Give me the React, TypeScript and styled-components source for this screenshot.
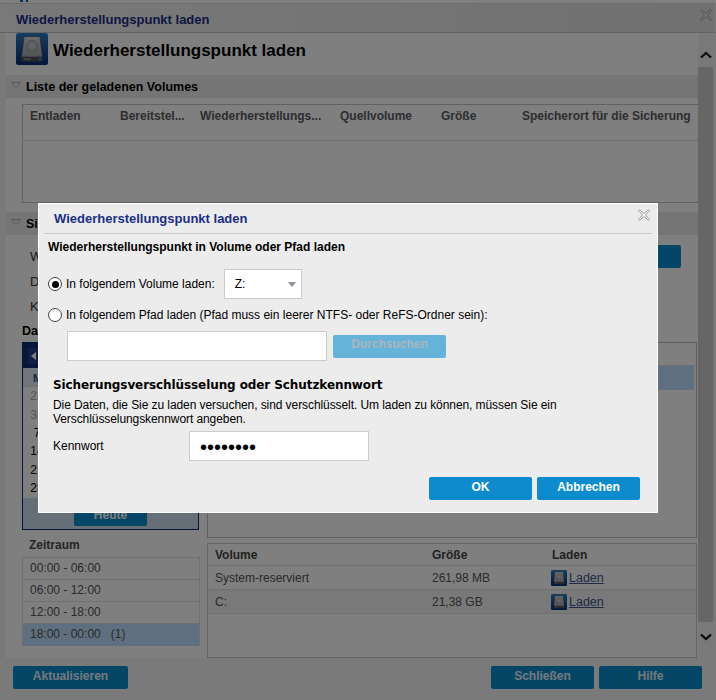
import styled, { createGlobalStyle } from 'styled-components';

const GlobalStyle = createGlobalStyle`
  html, body {
    margin: 0;
    padding: 0;
    background: #fff;
  }
  body {
    font-family: "Liberation Sans", Arial, sans-serif;
    font-size: 12px;
    color: #000;
  }
`;

const columns = [
  { label: 'Entladen', width: 90 },
  { label: 'Bereitstel...', width: 80 },
  { label: 'Wiederherstellungs...', width: 140 },
  { label: 'Quellvolume', width: 101 },
  { label: 'Größe', width: 81 },
  { label: 'Speicherort für die Sicherung', width: 175 },
];

// only the first column of the month shows beside the dialog
const calendarDays = ['23', '30', '7', '14', '21', '28'];

const periods = ['00:00 - 06:00', '06:00 - 12:00', '12:00 - 18:00', '18:00 - 00:00   (1)'];

function DiskIcon({ size }: { size: number }) {
  return (
    <svg width={size} height={size} viewBox="0 0 32 32">
      <defs>
        <linearGradient id="diskBg" x1="0" y1="0" x2="0" y2="1">
          <stop offset="0" stopColor="#2a7cc6" />
          <stop offset="1" stopColor="#0a2a72" />
        </linearGradient>
        <linearGradient id="diskBody" x1="0" y1="0" x2="0" y2="1">
          <stop offset="0" stopColor="#d0d2d4" />
          <stop offset="1" stopColor="#a4a8ab" />
        </linearGradient>
      </defs>
      <rect width="32" height="32" rx="2.500" fill="url(#diskBg)" />
      <path d="M8 3.500h16l2.500 20.500h-21z" fill="url(#diskBody)" stroke="#4e5358" strokeWidth="0.8" />
      <circle cx="16" cy="13" r="5.500" fill="#b8bcbf" stroke="#94999d" />
      <circle cx="16" cy="13" r="1.600" fill="#d8dadc" />
      <rect x="5.500" y="24" width="21" height="4.500" fill="#4c5156" />
      <rect x="8" y="25.600" width="7" height="1" fill="#a8acb0" />
      <rect x="23" y="25" width="2" height="2" fill="#3f8fe0" />
    </svg>
  );
}

function CloseIcon() {
  return (
    <svg width="12" height="12" viewBox="0 0 12 12">
      <path
        d="M1.500 .5 6 4.500 10.500 .5 11.500 1.500 7.500 6 11.500 10.500 10.500 11.500 6 7.500 1.500 11.500 .5 10.500 4.500 6 .5 1.500z"
        fill="#f4f4f4"
        stroke="#8a8a8a"
        strokeWidth="0.8"
      />
    </svg>
  );
}

function Chevron({ down }: { down?: boolean }) {
  return (
    <svg width="12" height="8" viewBox="0 0 12 8">
      <path d={down ? 'M1 1.500 6 6 11 1.500' : 'M1 6.500 6 2 11 6.500'} fill="none" stroke="#111" strokeWidth="2.200" />
    </svg>
  );
}

function SectionHeader({ title }: { title: string }) {
  return (
    <SectionBar>
      <svg width="10" height="6" viewBox="0 0 10 6">
        <path d="M.5 .5h9L5 5.500z" fill="none" stroke="#b4b4b4" />
      </svg>
      <span>{title}</span>
    </SectionBar>
  );
}

export default function App() {
  return (
    <Page>
      <GlobalStyle />
      <TopSliver>
        <SliverBit />
        <SliverBit />
      </TopSliver>
      <TitleBar>
        <WindowTitle>Wiederherstellungspunkt laden</WindowTitle>
        <CloseIcon />
      </TitleBar>
      <Body>
        <Content>
          <HeadRow>
            <DiskIcon size={32} />
            <h1>Wiederherstellungspunkt laden</h1>
          </HeadRow>
          <SectionHeader title="Liste der geladenen Volumes" />
          <MountedTable>
            <MountedHead>
              {columns.map((c) => (
                <MountedCell key={c.label} $width={c.width}>
                  {c.label}
                </MountedCell>
              ))}
            </MountedHead>
          </MountedTable>
          <SecondSection>
            <SectionHeader title="Si" />
          </SecondSection>
          <FormBlock>
            <FormRow>
              <span>W</span>
              <SmallButton />
            </FormRow>
            <FormRow>D</FormRow>
            <FormRow>K</FormRow>
            <DateLabel>Dat</DateLabel>
          </FormBlock>
          <Split>
            <LeftColumn>
              <Calendar>
                <CalendarHead>
                  <BackButton />
                </CalendarHead>
                <WeekDays>M</WeekDays>
                <Weeks>
                  {calendarDays.map((day, i) => (
                    <DayCell key={day} $muted={i < 2}>
                      {day}
                    </DayCell>
                  ))}
                </Weeks>
                <CalendarFoot>
                  <TodayButton>Heute</TodayButton>
                </CalendarFoot>
              </Calendar>
              <PeriodTitle>Zeitraum</PeriodTitle>
              <PeriodList>
                {periods.map((p, i) => (
                  <PeriodRow key={p} $selected={i === 3}>
                    {p}
                  </PeriodRow>
                ))}
              </PeriodList>
            </LeftColumn>
            <RightColumn>
              <PointsPanel>
                <PointsHead />
                <SelectedPoint />
              </PointsPanel>
              <VolumePanel>
                <VolumeRow $head>
                  <VolumeName>Volume</VolumeName>
                  <VolumeSize>Größe</VolumeSize>
                  <span>Laden</span>
                </VolumeRow>
                <VolumeRow>
                  <VolumeName>System-reserviert</VolumeName>
                  <VolumeSize>261,98 MB</VolumeSize>
                  <LoadLink>
                    <DiskIcon size={16} />
                    <a>Laden</a>
                  </LoadLink>
                </VolumeRow>
                <VolumeRow $alt>
                  <VolumeName>C:</VolumeName>
                  <VolumeSize>21,38 GB</VolumeSize>
                  <LoadLink>
                    <DiskIcon size={16} />
                    <a>Laden</a>
                  </LoadLink>
                </VolumeRow>
              </VolumePanel>
            </RightColumn>
          </Split>
        </Content>
        <ScrollBar>
          <Chevron />
          <ScrollThumb />
          <Chevron down />
        </ScrollBar>
      </Body>
      <Footer>
        <BlueButton $width={115}>Aktualisieren</BlueButton>
        <FooterRight>
          <BlueButton $width={103}>Schließen</BlueButton>
          <BlueButton $width={103}>Hilfe</BlueButton>
        </FooterRight>
      </Footer>

      <Mask />

      <Modal>
        <ModalTitleBar>
          <h2>Wiederherstellungspunkt laden</h2>
          <CloseIcon />
        </ModalTitleBar>
        <ModalBody>
          <ModalLead>Wiederherstellungspunkt in Volume oder Pfad laden</ModalLead>
          <VolumeChoice>
            <Radio $checked />
            <span>In folgendem Volume laden:</span>
            <FakeSelect>
              <span>Z:</span>
              <SelectCaret />
            </FakeSelect>
          </VolumeChoice>
          <PathChoice>
            <Radio />
            <span>In folgendem Pfad laden (Pfad muss ein leerer NTFS- oder ReFS-Ordner sein):</span>
          </PathChoice>
          <PathRow>
            <PathInput readOnly value="" />
            <BrowseButton>Durchsuchen</BrowseButton>
          </PathRow>
          <Encryption>
            <h3>Sicherungsverschlüsselung oder Schutzkennwort</h3>
            <p>
              Die Daten, die Sie zu laden versuchen, sind verschlüsselt. Um laden zu können, müssen Sie ein
              <br />
              Verschlüsselungskennwort angeben.
            </p>
            <PasswordRow>
              <label>Kennwort</label>
              <PasswordInput type="password" readOnly value="12345678" />
            </PasswordRow>
          </Encryption>
          <ModalActions>
            <ModalButton>OK</ModalButton>
            <ModalButton>Abbrechen</ModalButton>
          </ModalActions>
        </ModalBody>
      </Modal>
    </Page>
  );
}

const Page = styled.div`
  position: relative;
  width: 716px;
  height: 700px;
  overflow: hidden;
  display: flex;
  flex-direction: column;
  background: #f2f2f2;
`;

const TopSliver = styled.div`
  height: 3px;
  flex: none;
  background: #fff;
  display: flex;
  gap: 3px;
  padding-left: 20px;
`;

const SliverBit = styled.div`
  width: 2.500px;
  height: 2px;
  background: #1c5fb0;
`;

const TitleBar = styled.div`
  height: 30px;
  flex: none;
  display: flex;
  align-items: center;
  justify-content: space-between;
  padding: 0 3px 0 16px;
  margin-right: 1px;
  background: linear-gradient(90deg, #f2f2f2, #e2e2e2);
  border-top: 1px solid #dcdcdc;
  border-bottom: 1px solid #c4c4c4;
  box-sizing: border-box;

  svg {
    margin-bottom: 6px;
  }
`;

const WindowTitle = styled.div`
  font-size: 13px;
  font-weight: bold;
  color: #1a2f86;
  margin-top: 3px;
`;

const Body = styled.div`
  flex: none;
  height: 625px;
  display: flex;
  padding-left: 6px;
`;

const Content = styled.div`
  width: 692px;
  flex: none;
  background: #fff;
`;

const HeadRow = styled.div`
  height: 42px;
  display: flex;
  align-items: flex-start;
  gap: 5px;
  padding-left: 10px;
  box-sizing: border-box;

  h1 {
    margin: 8px 0 0;
    font-size: 17px;
    line-height: 20px;
    font-weight: bold;
    color: #000;
  }
`;

const SectionBar = styled.div`
  height: 23px;
  display: flex;
  align-items: center;
  gap: 5px;
  padding-left: 5px;
  background: #ebebeb;
  font-size: 12.500px;
  font-weight: bold;

  svg {
    margin-bottom: 3px;
  }
`;

const MountedTable = styled.div`
  height: 99px;
  margin: 6px 0 0 16px;
  border: 1px solid #c0c0cc;
  border-right: none;
  box-sizing: border-box;
`;

const MountedHead = styled.div`
  height: 36px;
  display: flex;
  padding: 4px 0 0 7px;
  box-sizing: border-box;
  border-bottom: 1px solid #d8d8d8;
`;

const MountedCell = styled.div<{ $width: number }>`
  width: ${(p) => p.$width}px;
  flex: none;
  font-size: 12px;
  font-weight: bold;
  color: #5c5c5c;
  white-space: nowrap;
`;

const SecondSection = styled.div`
  margin-top: 9px;
`;

const FormBlock = styled.div`
  height: 107px;
  padding-top: 9px;
  box-sizing: border-box;
`;

const FormRow = styled.div`
  height: 24px;
  display: flex;
  align-items: center;
  justify-content: space-between;
  padding: 0 17px 0 24px;
  font-size: 13px;
  color: #333;

  & + & {
    margin-top: 1px;
  }
`;

const SmallButton = styled.div`
  width: 100px;
  height: 23px;
  border-radius: 2px;
  background: #0a8ccf;
`;

const DateLabel = styled.div`
  height: 22px;
  margin-top: 2px;
  padding-left: 16px;
  font-size: 12.500px;
  font-weight: bold;
  display: flex;
  align-items: center;
`;

const Split = styled.div`
  display: grid;
  grid-template-columns: 178px 490px;
  column-gap: 7px;
  padding-left: 16px;
`;

const LeftColumn = styled.div`
  display: flex;
  flex-direction: column;
`;

const RightColumn = styled.div`
  display: flex;
  flex-direction: column;
  gap: 5px;
`;

const Calendar = styled.div`
  width: 177px;
  height: 188px;
  border: 1px solid #0e2a6e;
  box-sizing: border-box;
  display: flex;
  flex-direction: column;
`;

const CalendarHead = styled.div`
  height: 25px;
  flex: none;
  background: #0e2a6e;
  display: flex;
  align-items: center;
  padding-left: 5px;
`;

const BackButton = styled.div`
  width: 12px;
  height: 16px;
  background: #1c3c8c;
  position: relative;

  &::before {
    content: '';
    position: absolute;
    left: 3px;
    top: 4px;
    border-style: solid;
    border-width: 4px 5px 4px 0;
    border-color: transparent #fff transparent transparent;
  }
`;

const WeekDays = styled.div`
  height: 19px;
  flex: none;
  display: flex;
  align-items: center;
  padding-left: 10px;
  background: #e2e8f2;
  font-weight: bold;
  color: #2c4a90;
  font-size: 11px;
`;

const Weeks = styled.div`
  flex: none;
  display: grid;
  grid-template-columns: 28px;
  grid-auto-rows: 18.400px;
  align-items: center;
  justify-items: center;
`;

const DayCell = styled.div<{ $muted: boolean }>`
  font-size: 12px;
  color: ${(p) => (p.$muted ? '#aaaaaa' : '#000')};
`;

const CalendarFoot = styled.div`
  flex: 1;
  margin-top: 1px;
  background: #ccdcf0;
  display: flex;
  justify-content: center;
  align-items: flex-end;
  padding-bottom: 3px;
`;

const TodayButton = styled.div`
  width: 73px;
  height: 22px;
  border-radius: 2px;
  background: #0a8ccf;
  color: #fff;
  font-weight: bold;
  text-align: center;
  line-height: 22px;
`;

const PeriodTitle = styled.div`
  height: 27px;
  padding: 3px 0 0 7px;
  box-sizing: border-box;
  display: flex;
  align-items: center;
  font-weight: bold;
  color: #4a4a4a;
`;

const PeriodList = styled.div`
  border: 1px solid #e0e0e0;
  border-bottom: none;
`;

const PeriodRow = styled.div<{ $selected: boolean }>`
  height: 22px;
  box-sizing: border-box;
  line-height: 21px;
  padding-left: 7px;
  white-space: pre;
  color: #555;
  border-bottom: 1px solid ${(p) => (p.$selected ? '#c0dfff' : '#e0e0e0')};
  background: ${(p) => (p.$selected ? '#c0dfff' : 'transparent')};
`;

const PointsPanel = styled.div`
  height: 196px;
  border: 1px solid #c0c0c8;
  box-sizing: border-box;
  padding-right: 2px;
`;

const PointsHead = styled.div`
  height: 22px;
  border-bottom: 1px solid #e0e0e0;
  margin-right: -2px;
`;

const SelectedPoint = styled.div`
  height: 24px;
  background: #c0dfff;
`;

const VolumePanel = styled.div`
  height: 115px;
  border: 1px solid #c8c8c8;
  box-sizing: border-box;
`;

const VolumeRow = styled.div<{ $head?: boolean; $alt?: boolean }>`
  height: ${(p) => (p.$head ? 22 : 24)}px;
  display: flex;
  align-items: center;
  padding-left: 7px;
  box-sizing: border-box;
  border-bottom: 1px solid #e0e0e0;
  color: ${(p) => (p.$head ? '#444' : '#555')};
  font-weight: ${(p) => (p.$head ? 'bold' : 'normal')};
  background: ${(p) => (p.$alt ? '#f2f2f2' : 'transparent')};
`;

const VolumeName = styled.span`
  width: 217px;
  flex: none;
`;

const VolumeSize = styled.span`
  width: 120px;
  flex: none;
`;

const LoadLink = styled.span`
  display: flex;
  align-items: center;
  gap: 2px;
  margin-left: -1px;

  a {
    font-size: 12.500px;
    color: #3a5490;
    text-decoration: underline;
  }
`;

const ScrollBar = styled.div`
  width: 15px;
  flex: none;
  display: flex;
  flex-direction: column;
  align-items: center;
  padding-top: 18px;
`;

const ScrollThumb = styled.div`
  width: 15px;
  height: 555px;
  margin: 8px 0 11px;
  flex: none;
  background: #cccccc;
`;

const Footer = styled.div`
  flex: 1;
  display: flex;
  justify-content: space-between;
  padding: 8px 14px 0 13px;
  background: #f4f4f4;
`;

const FooterRight = styled.div`
  display: flex;
  gap: 5px;
`;

const BlueButton = styled.div<{ $width: number }>`
  width: ${(p) => p.$width}px;
  height: 23px;
  border-radius: 2px;
  background: #0a8ccf;
  color: #e6f2f8;
  font-weight: bold;
  text-align: center;
  line-height: 21px;
`;

const Mask = styled.div`
  position: absolute;
  inset: 0;
  background: rgba(0, 0, 0, 0.5);
`;

const Modal = styled.div`
  position: absolute;
  left: 38px;
  top: 203px;
  width: 620px;
  height: 310px;
  box-sizing: border-box;
  background: #ececec;
  border: 1px solid #fff;
  padding: 0 5px;
  display: flex;
  flex-direction: column;
`;

const ModalTitleBar = styled.div`
  height: 30px;
  flex: none;
  display: flex;
  align-items: center;
  justify-content: space-between;
  padding: 0 2px 4px 10px;
  box-sizing: border-box;
  border-bottom: 1px solid #cccccc;

  h2 {
    margin: 4px 0 0;
    font-size: 13px;
    font-weight: bold;
    color: #1a2f86;
  }

  svg {
    margin-bottom: 3px;
  }
`;

const ModalBody = styled.div`
  padding: 6px 0 0 4px;
  display: flex;
  flex-direction: column;
`;

const ModalLead = styled.div`
  font-size: 12px;
  line-height: 14px;
  font-weight: bold;
`;

const VolumeChoice = styled.div`
  margin-top: 15px;
  height: 30px;
  display: flex;
  align-items: center;
  gap: 4px;
`;

const PathChoice = styled.div`
  margin-top: 1px;
  height: 30px;
  display: flex;
  align-items: center;
  gap: 4px;
`;

const Radio = styled.span<{ $checked?: boolean }>`
  width: 14px;
  height: 14px;
  flex: none;
  box-sizing: border-box;
  border-radius: 50%;
  border: 1px solid #444;
  background: #fff;
  position: relative;

  &::after {
    content: '';
    display: ${(p) => (p.$checked ? 'block' : 'none')};
    position: absolute;
    left: 2.500px;
    top: 2.500px;
    width: 7px;
    height: 7px;
    border-radius: 50%;
    background: #000;
  }
`;

const FakeSelect = styled.div`
  width: 78px;
  height: 30px;
  margin-left: 5px;
  box-sizing: border-box;
  border: 1px solid #ccc;
  background: #fff;
  display: flex;
  align-items: center;
  justify-content: space-between;
  padding: 0 5px 0 10px;
`;

const SelectCaret = styled.span`
  border-style: solid;
  border-width: 5px 4.500px 0;
  border-color: #8a939b transparent transparent;
`;

const PathRow = styled.div`
  margin-top: 1px;
  display: flex;
  align-items: center;
  gap: 6px;
  padding-left: 19px;
`;

const PathInput = styled.input`
  width: 260px;
  height: 30px;
  box-sizing: border-box;
  border: 1px solid #ccc;
  background: #fff;
  outline: none;
`;

const BrowseButton = styled.div`
  width: 113px;
  height: 23px;
  border-radius: 2px;
  background: #66b3d9;
  color: #a9b5bd;
  font-weight: bold;
  text-align: center;
  line-height: 19px;
`;

const Encryption = styled.div`
  margin-top: 16px;
  padding-left: 5px;

  h3 {
    margin: 0;
    font-family: "DejaVu Sans", Verdana, sans-serif;
    font-size: 12px;
    letter-spacing: -0.09px;
    line-height: 16px;
    font-weight: bold;
  }

  p {
    margin: 5px 0 0;
    font-size: 12px;
    letter-spacing: -0.08px;
    line-height: 14px;
  }
`;

const PasswordRow = styled.div`
  margin-top: 5px;
  display: flex;
  align-items: center;

  label {
    width: 136px;
    flex: none;
  }
`;

const PasswordInput = styled.input`
  width: 180px;
  height: 30px;
  box-sizing: border-box;
  border: 1px solid #ccc;
  background: #fff;
  padding: 2px 0 0 10px;
  font-family: "Liberation Sans", Arial, sans-serif;
  font-size: 20px;
  outline: none;
`;

const ModalActions = styled.div`
  margin-top: 16px;
  display: flex;
  justify-content: flex-end;
  gap: 5px;
  padding-right: 12px;
`;

const ModalButton = styled.div`
  width: 103px;
  height: 23px;
  border-radius: 2px;
  background: #0c8ccf;
  color: #fff;
  font-weight: bold;
  text-align: center;
  line-height: 20px;
`;
